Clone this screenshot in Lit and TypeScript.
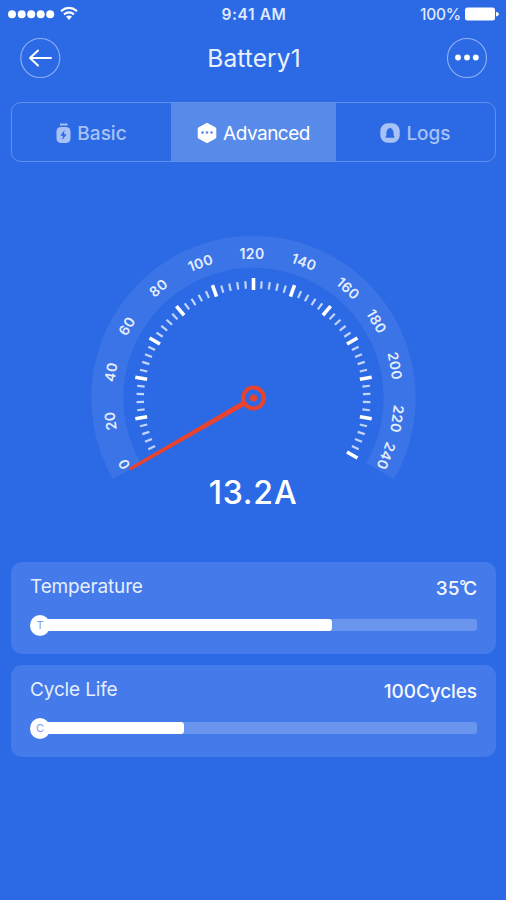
import { LitElement, html, svg, css } from "lit";
import { customElement, property } from "lit/decorators.js";

@customElement("status-bar")
class StatusBar extends LitElement {
  static styles = css`
    :host { display: flex; align-items: center; justify-content: space-between; height: 28px; padding: 0 7px 0 8px; box-sizing: border-box; color: #fff; }
    .side { display: flex; align-items: center; width: 90px; }
    .right { justify-content: flex-end; }
    .time { font-size: 15.5px; font-weight: 600; letter-spacing: 0.6px; color: #dfe9fd; padding-left: 1px; }
    .percent { font-size: 15.5px; font-weight: 500; letter-spacing: -0.2px; margin-right: 4px; color: #dfe9fd; }
    svg { display: block; flex: none; }
  `;
  render() {
    return html`
      <div class="side">
        <svg width="70" height="16" viewBox="0 0 70 16" fill="#fff">
          ${[4, 13.7, 23.2, 32.7, 42.2].map((x) => svg`<circle cx=${x} cy="8.3" r="4"/>`)}
          <g fill="none" stroke="#fff" stroke-width="2">
            <path d="M53 5.1 Q61 -1.3 69 5.1"/>
            <path d="M56 8.4 Q61 4.4 66 8.4"/>
          </g>
          <path d="M58 10.6 Q61 8.2 64 10.6 L61 14z"/>
        </svg>
      </div>
      <div class="time">9:41 AM</div>
      <div class="side right">
        <span class="percent">100%</span>
        <svg width="34" height="14" viewBox="0 0 34 14" fill="#fff">
          <rect x="0" y="0.6" width="30" height="13" rx="2.5"/>
          <path d="M31 4.7 Q34 5.5 34 7.1 Q34 8.7 31 9.5z"/>
        </svg>
      </div>`;
  }
}

@customElement("amp-gauge")
class AmpGauge extends LitElement {
  static styles = css`
    :host { display: flex; flex-direction: column; align-items: center; color: #fff; }
    svg { display: block; }
    .label { font-size: 14px; font-weight: 600; letter-spacing: 0.4px; fill: #e4edfd; text-anchor: middle; }
    .value { font-size: 32px; line-height: 36px; font-weight: 500; letter-spacing: 0.8px; margin-top: -25px; }
  `;
  // text, centre x, centre y, rotation
  labels: [string, number, number, number][] = [
    ["0", 124, 464, -118], ["20", 110.5, 421, -98], ["40", 111, 372, -80],
    ["60", 127, 326, -60], ["80", 158.5, 288, -41], ["100", 200.5, 263, -20],
    ["120", 252, 253.5, 0], ["140", 304, 262, 20], ["160", 348, 288.5, 42],
    ["180", 376.5, 321.5, 60], ["200", 395, 366, 80], ["220", 397, 419, 98],
    ["240", 386, 456, 112],
  ];
  render() {
    const ticks = [];
    for (let i = 1; i <= 60; i++) {
      const major = i % 5 === 0;
      ticks.push(svg`<line x1="253.5" x2="253.5" y1=${major ? 278 : 281} y2=${major ? 290 : 288.5}
        stroke=${major ? "#fff" : "#c3d5fa"} stroke-width=${major ? 3.6 : 2.2}
        transform="rotate(${-120 + i * 4} 253.5 398)"/>`);
    }
    return html`
      <svg width="506" height="270" viewBox="0 230 506 270">
        <path d="M126.9 471.1 A146.2 146.2 0 1 1 380.1 471.1" fill="none" stroke="#3b74e7" stroke-width="32"/>
        ${ticks}
        ${this.labels.map(([t, x, y, r]) => svg`<text class="label" transform="translate(${x} ${y}) rotate(${r})" y="5">${t}</text>`)}
        <path d="M129 467.8 L246 399 L248.3 403.8 L130.7 470.4z" fill="#e8432f"/>
        <circle cx="253.5" cy="398" r="10.4" fill="#2c6ae5" stroke="#e8432f" stroke-width="4"/>
        <circle cx="253.5" cy="398" r="3.6" fill="#e8432f"/>
      </svg>
      <div class="value">13.2A</div>`;
  }
}

@customElement("meter-card")
class MeterCard extends LitElement {
  @property() name = "";
  @property() value = "";
  @property() badge = "";
  @property({ type: Number }) fill = 0;
  static styles = css`
    :host { display: block; height: 92px; box-sizing: border-box; padding: 13px 19px 0; border-radius: 11px; background: #447aea; color: #e6eefd; }
    .head { display: flex; justify-content: space-between; height: 39px; line-height: 24px; }
    .name { font-size: 19px; letter-spacing: -0.15px; }
    .value { font-size: 19px; font-weight: 500; padding-top: 2px; letter-spacing: -0.1px; color: #f5f8ff; }
    .degree { font-size: 15px; line-height: 0; vertical-align: 4px; letter-spacing: -3px; }
    .meter { display: flex; align-items: center; height: 22px; }
    .knob { flex: none; display: flex; align-items: center; justify-content: center; width: 20px; height: 21px; border-radius: 50%; background: #fff; color: #819eec; font-size: 11px; }
    .track { flex: 1; height: 12px; margin-left: -4px; border-radius: 3px; background: #6a95ee; }
    .bar { height: 100%; border-radius: 0 3px 3px 0; background: #fff; }
  `;
  render() {
    const [amount, unit] = this.value.split("°");
    return html`
      <div class="head">
        <span class="name">${this.name}</span>
        <span class="value">${amount}${unit ? html`<span class="degree">°</span>${unit}` : ""}</span>
      </div>
      <div class="meter">
        <span class="knob">${this.badge}</span>
        <div class="track"><div class="bar" style="width:${this.fill}%"></div></div>
      </div>`;
  }
}

@customElement("app-root")
class AppRoot extends LitElement {
  static styles = css`
    :host { display: flex; flex-direction: column; height: 900px; background: #2c6ae5; color: #fff; font-family: Inter, "Liberation Sans", sans-serif; overflow: hidden; }
    svg { display: block; flex: none; }
    header { display: flex; align-items: center; justify-content: space-between; height: 60px; padding: 0 18px 0 20px; }
    .title { font-size: 24.5px; letter-spacing: 0.1px; color: #eaf1fe; line-height: 30px; }
    .tabs { display: flex; box-sizing: border-box; height: 60px; margin: 14px 10px 0 11px; border: 1.5px solid #5f90ee; border-radius: 10px; overflow: hidden; }
    .tab { display: flex; align-items: center; justify-content: center; gap: 6px; flex: 1; padding-top: 2px; font-size: 19px; font-weight: 500; color: #a8c2f6; }
    .first { flex: 0 0 159px; }
    .active { flex: 0 0 165px; background: #588ae9; color: #fff; font-weight: 400; letter-spacing: -0.5px; }
    amp-gauge { margin-top: 68px; }
    .cards { display: flex; flex-direction: column; gap: 11px; margin: 51px 10px 0 11px; }
  `;
  render() {
    return html`
      <status-bar></status-bar>
      <header>
        <svg width="41" height="41" viewBox="0 0 41 41" fill="none">
          <circle cx="20.3" cy="20" r="19.5" stroke="#8fb0f4" stroke-width="1.1"/>
          <path d="M31 20H10M18 12.5L10 20L18 27.5" stroke="#fff" stroke-width="2" stroke-linejoin="round" stroke-linecap="round"/>
        </svg>
        <span class="title">Battery1</span>
        <svg width="41" height="41" viewBox="0 0 41 41" fill="#fff">
          <circle cx="20" cy="20" r="19.5" fill="none" stroke="#8fb0f4" stroke-width="1.1"/>
          <circle cx="11" cy="19.5" r="2.9"/><circle cx="20" cy="19.5" r="2.9"/><circle cx="28.8" cy="19.5" r="2.9"/>
        </svg>
      </header>
      <nav class="tabs">
        <div class="tab first">
          <svg width="15" height="20" viewBox="0 0 15 20">
            <path d="M4 .5h7.5v2H4z" fill="#a8c2f6"/>
            <rect x=".5" y="4" width="14" height="16" rx="4.5" fill="#a8c2f6"/>
            <path d="M8.6 7L4.3 12.7H7L6.3 17L10.7 11.2H8z" fill="#2c6ae5"/>
          </svg>
          <span>Basic</span>
        </div>
        <div class="tab active">
          <svg width="20" height="20" viewBox="0 0 20 20">
            <path d="M10 1.9L17.3 5.9V14.1L10 18.1L2.7 14.1V5.9z" fill="#fff" stroke="#fff" stroke-width="4" stroke-linejoin="round"/>
            <g fill="#588ae9"><circle cx="5.5" cy="9.5" r="1.3"/><circle cx="10" cy="9.5" r="1.3"/><circle cx="14.5" cy="9.5" r="1.3"/></g>
          </svg>
          <span>Advanced</span>
        </div>
        <div class="tab">
          <svg width="20" height="20" viewBox="0 0 20 20">
            <rect x=".3" y=".3" width="19.4" height="19.4" rx="7.5" fill="#a8c2f6"/>
            <path d="M10 5Q13.2 6.4 13.2 9.5V13H14V14.3H6V13H6.8V9.5Q6.8 6.4 10 5z" fill="#2c6ae5" stroke="#2c6ae5" stroke-width=".8" stroke-linejoin="round"/>
          </svg>
          <span>Logs</span>
        </div>
      </nav>
      <amp-gauge></amp-gauge>
      <div class="cards">
        <meter-card name="Temperature" value="35°C" badge="T" .fill=${66.4}></meter-card>
        <meter-card name="Cycle Life" value="100Cycles" badge="C" .fill=${32}></meter-card>
      </div>`;
  }
}
